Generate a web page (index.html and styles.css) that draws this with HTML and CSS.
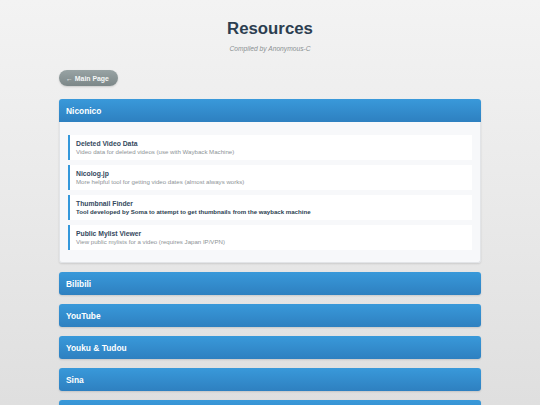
FILE: index.html
```html
<!DOCTYPE html>
<html>
<head>
<meta charset="utf-8">
<title>Resources</title>
<link rel="stylesheet" href="styles.css">
</head>
<body>
<div class="page">
  <header class="top">
    <h1 class="title">Resources</h1>
    <p class="subtitle">Compiled by Anonymous-C</p>
  </header>
  <div class="nav">
    <a class="back" href="#">&larr; Main Page</a>
  </div>
  <section class="panel open">
    <div class="panel-head">Niconico</div>
    <div class="panel-body">
      <div class="item">
        <div class="item-title">Deleted Video Data</div>
        <div class="item-desc">Video data for deleted videos (use with Wayback Machine)</div>
      </div>
      <div class="item">
        <div class="item-title">Nicolog.jp</div>
        <div class="item-desc">More helpful tool for getting video dates (almost always works)</div>
      </div>
      <div class="item">
        <div class="item-title">Thumbnail Finder</div>
        <div class="item-desc strong">Tool developed by Soma to attempt to get thumbnails from the wayback machine</div>
      </div>
      <div class="item">
        <div class="item-title">Public Mylist Viewer</div>
        <div class="item-desc">View public mylists for a video (requires Japan IP/VPN)</div>
      </div>
    </div>
  </section>
  <section class="panel"><div class="panel-head">Bilibili</div></section>
  <section class="panel"><div class="panel-head">YouTube</div></section>
  <section class="panel"><div class="panel-head">Youku &amp; Tudou</div></section>
  <section class="panel"><div class="panel-head">Sina</div></section>
  <section class="panel"><div class="panel-head"></div></section>
</div>
</body>
</html>
```

FILE: styles.css
```css
html, body {
  margin: 0;
  padding: 0;
}
body {
  font-family: "Liberation Sans", Arial, sans-serif;
  background: linear-gradient(to bottom, #f3f3f3 0%, #e9e9e9 50%, #dedede 100%);
  min-height: 405px;
  overflow: hidden;
}
.page {
  width: 422px;
  margin: 0 auto;
  padding-top: 19px;
}
.top {
  text-align: center;
}
.title {
  margin: 0;
  font-size: 16.8px;
  line-height: 20px;
  font-weight: bold;
  color: #2c3e50;
}
.subtitle {
  margin: 6px 0 0;
  font-size: 6.7px;
  line-height: 8px;
  font-style: italic;
  color: #8a9092;
}
.nav {
  margin-top: 17px;
  display: flex;
}
.back {
  display: flex;
  align-items: center;
  height: 16px;
  padding: 0 9px 0 7px;
  border-radius: 8px;
  background: linear-gradient(to bottom, #98a3a4, #7c8788);
  color: #f4f6f6;
  font-size: 6.9px;
  font-weight: bold;
  text-decoration: none;
  box-shadow: 0 1px 2px rgba(0,0,0,0.15);
}
.panel {
  margin-top: 9px;
  border-radius: 3px;
  box-shadow: 0 1px 2px rgba(0,0,0,0.12);
}
.panel.open {
  margin-top: 13px;
}
.panel-head {
  height: 23px;
  display: flex;
  align-items: center;
  padding-left: 7px;
  border-radius: 3px;
  background: linear-gradient(to bottom, #3999da, #2e80c0);
  color: #ffffff;
  font-size: 8.4px;
  font-weight: bold;
}
.panel.open .panel-head {
  border-radius: 3px 3px 0 0;
}
.panel-body {
  background: #f7f8fa;
  border: 1px solid #e2e4e7;
  border-top: none;
  border-radius: 0 0 3px 3px;
  padding: 13px 8px 12px;
  display: flex;
  flex-direction: column;
  gap: 5px;
}
.item {
  background: #ffffff;
  border-left: 2px solid #3498db;
  padding: 4px 8px 4px 6px;
}
.item-title {
  font-size: 6.8px;
  line-height: 9px;
  font-weight: bold;
  color: #34495e;
}
.item-desc {
  font-size: 6.1px;
  line-height: 8px;
  color: #8d9396;
}
.item-desc.strong {
  font-weight: bold;
  color: #2c3e50;
}
```
